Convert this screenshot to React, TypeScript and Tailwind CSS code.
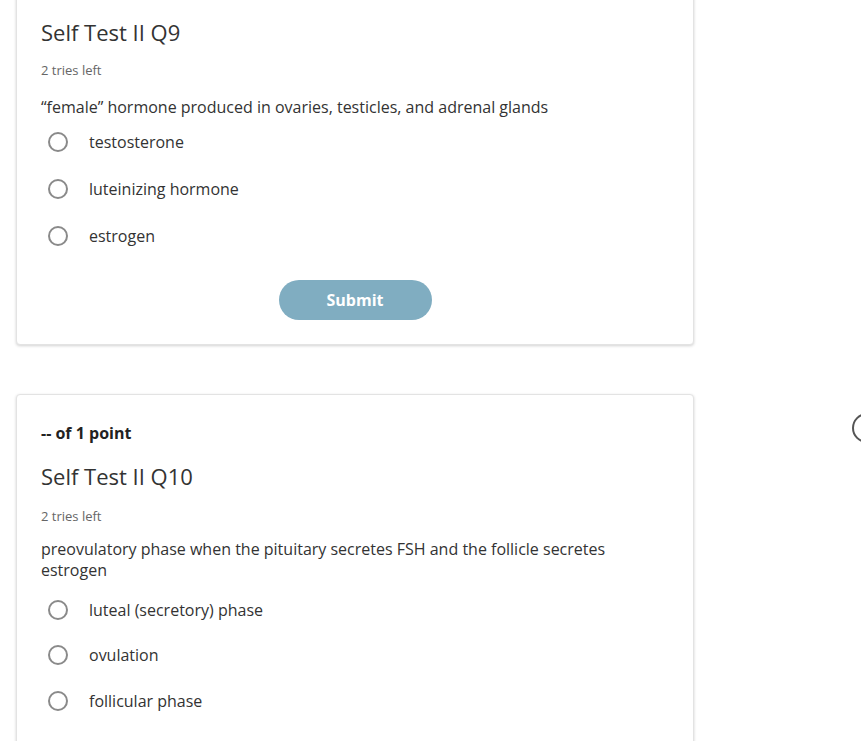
const font = "font-['Open_Sans','Liberation_Sans',sans-serif]";

type Question = {
  points?: string;
  title: string;
  prompt: string;
  options: string[];
  submit?: boolean;
};

const questions: Question[] = [
  {
    title: "Self Test II Q9",
    prompt: "\u201cfemale\u201d hormone produced in ovaries, testicles, and adrenal glands",
    options: ["testosterone", "luteinizing hormone", "estrogen"],
    submit: true,
  },
  {
    points: "-- of 1 point",
    title: "Self Test II Q10",
    prompt:
      "preovulatory phase when the pituitary secretes FSH and the follicle secretes estrogen",
    options: ["luteal (secretory) phase", "ovulation", "follicular phase"],
  },
];

function Radio() {
  return (
    <span className="w-[20px] h-[20px] rounded-full border-2 border-[#8a8a8a] bg-white shrink-0" />
  );
}

function QuestionCard({ q, first }: { q: Question; first?: boolean }) {
  return (
    <div
      className={`bg-white rounded-[4px] border border-[#e3e3e3] shadow-[0_1px_3px_rgba(0,0,0,0.18)] px-6 pb-6 ${
        first ? "pt-[24px] mt-[-7px]" : "pt-[27px] mt-[49px]"
      }`}
    >
      {q.points && (
        <div className="text-[16px] leading-[22px] font-bold text-[#222] mb-[18px]">
          {q.points}
        </div>
      )}
      <div className="text-[22px] leading-[28px] text-[#333]">{q.title}</div>
      <div
        className={`text-[13px] leading-[18px] text-[#666] ${
          first ? "mt-[15px]" : "mt-[17px]"
        }`}
      >
        2 tries left
      </div>
      <div
        className={`text-[16px] leading-[21px] text-[#333] ${
          first ? "mt-[18px]" : "mt-[14px]"
        }`}
      >
        {q.prompt}
      </div>
      <div className={`flex flex-col ${first ? "mt-0" : "mt-[6px]"}`}>
        {q.options.map((o) => (
          <label
            key={o}
            className={`flex items-center gap-[21px] pl-[7px] ${
              first ? "h-[47px]" : "h-[45.5px]"
            }`}
          >
            <Radio />
            <span className="text-[16px] text-[#333]">{o}</span>
          </label>
        ))}
      </div>
      {q.submit && (
        <div className="flex justify-center mt-[21px]">
          <button className="w-[153px] h-[40px] rounded-full bg-[#80adc1] text-white text-[16px] font-bold">
            Submit
          </button>
        </div>
      )}
    </div>
  );
}

export default function App() {
  return (
    <div className={`${font} bg-white w-[861px] h-[741px] overflow-hidden flex`}>
      <div className="w-[694px] pl-[16px] shrink-0">
        {questions.map((q, i) => (
          <QuestionCard key={q.title} q={q} first={i === 0} />
        ))}
      </div>
      <div className="flex-1 pl-[158px] pt-[413px]">
        <span className="block w-[30px] h-[30px] rounded-full border-2 border-[#555] shrink-0" />
      </div>
    </div>
  );
}
